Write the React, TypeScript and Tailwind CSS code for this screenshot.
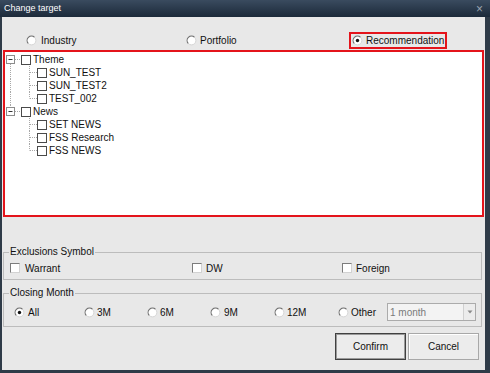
import React from "react";

const font = { fontFamily: '"Liberation Sans", Arial, sans-serif' };

function Radio({ checked }: { checked?: boolean }) {
  return (
    <svg width="11" height="11" viewBox="0 0 11 11" className="shrink-0">
      <circle cx="5.5" cy="5.5" r="4.3" fill="#ffffff" />
      <path d="M2.4 8.6 A4.3 4.3 0 0 1 8.6 2.4" stroke="#6f6f6f" fill="none" strokeWidth="1.1" />
      <path d="M8.6 2.4 A4.3 4.3 0 0 1 2.4 8.6" stroke="#d6d6d6" fill="none" strokeWidth="1" />
      {checked && <circle cx="5.5" cy="5.5" r="1.7" fill="#111111" />}
    </svg>
  );
}

function ClassicCheck() {
  return (
    <span className="block w-[10px] h-[10px] shrink-0 bg-white border border-t-[#7c7c7c] border-l-[#7c7c7c] border-b-[#d2d2d2] border-r-[#d2d2d2]" />
  );
}

function TreeCheck() {
  return <span className="block w-[10px] h-[10px] shrink-0 bg-white border border-[#4a4a4a]" />;
}

type Node = { label: string; children: string[] };
const tree: Node[] = [
  { label: "Theme", children: ["SUN_TEST", "SUN_TEST2", "TEST_002"] },
  { label: "News", children: ["SET NEWS", "FSS Research", "FSS NEWS"] },
];

function RootRow({ label, first, last }: { label: string; first: boolean; last: boolean }) {
  return (
    <div className="flex items-center h-[13px]">
      <svg width="16" height="13" viewBox="0 0 16 13" className="shrink-0">
        {!first && <line x1="5.5" y1="0" x2="5.5" y2="2" stroke="#a8a8a8" strokeDasharray="1 1" />}
        {!last && <line x1="5.5" y1="11" x2="5.5" y2="13" stroke="#a8a8a8" strokeDasharray="1 1" />}
        <rect x="1.5" y="2.5" width="8" height="8" fill="#fff" stroke="#8c8c8c" />
        <line x1="3.5" y1="6.5" x2="7.5" y2="6.5" stroke="#333" />
        <line x1="10" y1="6.5" x2="16" y2="6.5" stroke="#a8a8a8" strokeDasharray="1 1" />
      </svg>
      <TreeCheck />
      <span className="ml-[2px] text-[10px] leading-[13px] text-[#111]">{label}</span>
    </div>
  );
}

function ChildRow({ label, rootCont, lastChild }: { label: string; rootCont: boolean; lastChild: boolean }) {
  return (
    <div className="flex items-center h-[13px]">
      <svg width="32" height="13" viewBox="0 0 32 13" className="shrink-0">
        {rootCont && <line x1="5.5" y1="0" x2="5.5" y2="13" stroke="#a8a8a8" strokeDasharray="1 1" />}
        <line x1="24.5" y1="0" x2="24.5" y2={lastChild ? 6.5 : 13} stroke="#a8a8a8" strokeDasharray="1 1" />
        <line x1="25" y1="6.5" x2="32" y2="6.5" stroke="#a8a8a8" strokeDasharray="1 1" />
      </svg>
      <TreeCheck />
      <span className="ml-[2px] text-[10px] leading-[13px] text-[#111]">{label}</span>
    </div>
  );
}

export default function App() {
  return (
    <div className="w-[490px] h-[373px] flex flex-col bg-[#2f3b48] overflow-hidden" style={font}>
      {/* Title bar */}
      <div className="h-[17px] shrink-0 flex items-center justify-between pl-[4px] pr-[7px] bg-gradient-to-b from-[#3a4b5f] to-[#1c2a3a]">
        <span className="text-[9px] text-white leading-none">Change target</span>
        <span className="text-[12px] text-[#9aa4ae] leading-none">×</span>
      </div>

      {/* Body */}
      <div className="flex-1 ml-[2px] mr-[5px] mb-[3px] bg-[#e8e8e8] flex flex-col text-[10px] text-[#111]">
        {/* Target radios */}
        <div className="flex items-center h-[17px] mt-[15px] shrink-0">
          <div className="ml-[24px] w-[160px] flex items-center gap-[4px]">
            <Radio />
            <span>Industry</span>
          </div>
          <div className="w-[163px] flex items-center gap-[3px]">
            <Radio />
            <span>Portfolio</span>
          </div>
          <div className="w-[98px] h-[17px] border-2 border-[#e4141b] flex items-center pl-[1px] gap-[3px]">
            <Radio checked />
            <span>Recommendation</span>
          </div>
        </div>

        {/* Tree */}
        <div className="ml-[1px] mt-[1px] w-[481px] h-[167px] shrink-0 border-2 border-[#e4141b] bg-white pt-[1px]">
          {tree.map((n, i) => (
            <div key={n.label}>
              <RootRow label={n.label} first={i === 0} last={i === tree.length - 1} />
              {n.children.map((c, j) => (
                <ChildRow
                  key={c}
                  label={c}
                  rootCont={i < tree.length - 1}
                  lastChild={j === n.children.length - 1}
                />
              ))}
            </div>
          ))}
        </div>

        {/* Exclusions Symbol */}
        <fieldset className="ml-[1px] mt-[29px] w-[479px] border border-[#bcbcbc] px-[5px] pt-[3px] pb-[4px]">
          <legend className="px-[1px] leading-[12px] text-[10px]">Exclusions Symbol</legend>
          <div className="flex items-center h-[14px]">
            <div className="ml-[1px] w-[182px] flex items-center gap-[5px]">
              <ClassicCheck />
              <span>Warrant</span>
            </div>
            <div className="w-[150px] flex items-center gap-[4px]">
              <ClassicCheck />
              <span>DW</span>
            </div>
            <div className="flex items-center gap-[4px]">
              <ClassicCheck />
              <span>Foreign</span>
            </div>
          </div>
        </fieldset>

        {/* Closing Month */}
        <fieldset className="ml-[1px] mt-[7px] w-[479px] border border-[#bcbcbc] px-[5px] pt-[4px] pb-[5px]">
          <legend className="px-[1px] leading-[12px] text-[10px]">Closing Month</legend>
          <div className="flex items-center h-[18px]">
            <div className="ml-[5px] w-[70px] flex items-center gap-[3px]">
              <Radio checked />
              <span>All</span>
            </div>
            <div className="w-[63px] flex items-center gap-[2px]">
              <Radio />
              <span>3M</span>
            </div>
            <div className="w-[63px] flex items-center gap-[2px]">
              <Radio />
              <span>6M</span>
            </div>
            <div className="w-[64px] flex items-center gap-[3px]">
              <Radio />
              <span>9M</span>
            </div>
            <div className="w-[64px] flex items-center gap-[2px]">
              <Radio />
              <span>12M</span>
            </div>
            <div className="w-[49px] flex items-center gap-[2px]">
              <Radio />
              <span>Other</span>
            </div>
            <div className="w-[89px] h-[18px] border border-[#ababab] bg-[#f3f3f3] flex items-center">
              <span className="flex-1 pl-[2px] text-[#7a7a7a]">1 month</span>
              <div className="w-[12px] h-[16px] bg-[#ececec] border-l border-[#d0d0d0] flex items-center justify-center">
                <svg width="6" height="4" viewBox="0 0 6 4">
                  <path d="M0.5 0.5 L5.5 0.5 L3 3.5 Z" fill="#8a8a8a" />
                </svg>
              </div>
            </div>
          </div>
        </fieldset>

        {/* Buttons */}
        <div className="flex justify-end gap-[2px] mt-[6px] mr-[6px]">
          <button className="w-[71px] h-[27px] border border-[#404040] bg-[#ececec] shadow-[inset_0_0_0_1px_#9a9a9a] text-[10px] text-[#111]" style={font}>
            Confirm
          </button>
          <button className="w-[71px] h-[27px] border border-[#a8a8a8] bg-[#ececec] shadow-[inset_1px_1px_0_#ffffff] text-[10px] text-[#111]" style={font}>
            Cancel
          </button>
        </div>
      </div>
    </div>
  );
}
